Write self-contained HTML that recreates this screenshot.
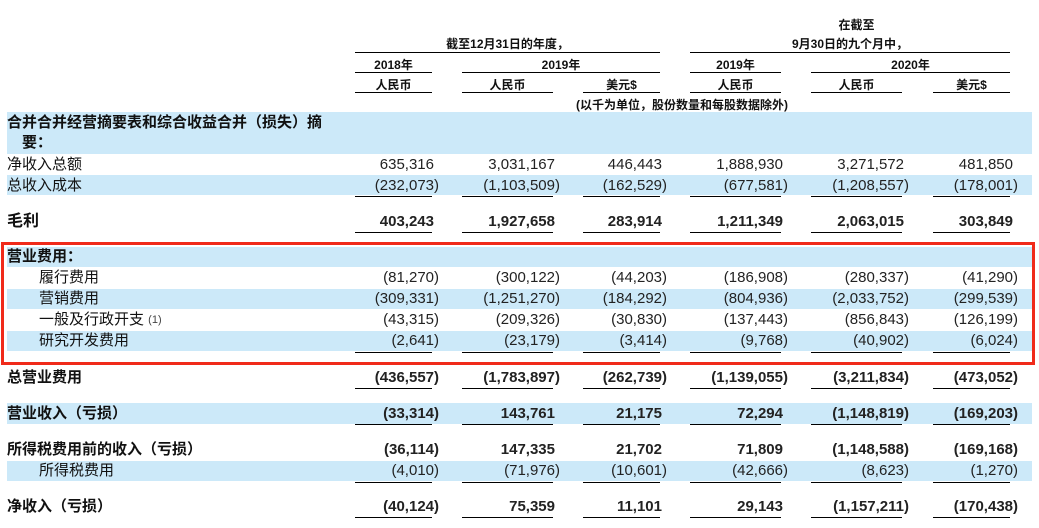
<!DOCTYPE html>
<html><head><meta charset="utf-8"><style>
body{margin:0;width:1039px;height:528px;background:#fff;position:relative;overflow:hidden;font-family:"Liberation Sans","Noto Sans CJK SC",sans-serif;color:#111}
.a{position:absolute;white-space:nowrap}
.band{position:absolute;left:7px;width:1025px;background:#cce9f9}
.h{font-size:12px;font-weight:bold;text-align:center}
.ln{position:absolute;height:1px;background:#000}
.lbl{position:absolute;font-size:15px;line-height:20px}
.b{font-weight:bold}
.n{position:absolute;font-size:15px;line-height:20px;text-align:right;color:#222}
.n i{font-style:normal;visibility:hidden}
.c1{left:330px;width:109px}.c2{left:450px;width:110px}.c3{left:560px;width:107px}
.c4{left:680px;width:108px}.c5{left:800px;width:109px}.c6{left:910px;width:108px}
</style></head><body>
<!-- header -->
<div class="a h" style="left:811px;width:91px;top:16px">在截至</div>
<div class="a h" style="left:355px;width:305px;top:35px">截至12月31日的年度，</div>
<div class="a h" style="left:690px;width:320px;top:35px">9月30日的九个月中，</div>
<div class="ln" style="left:355px;width:305px;top:52px"></div>
<div class="ln" style="left:690px;width:320px;top:52px"></div>
<div class="a h" style="left:355px;width:77px;top:56px">2018年</div>
<div class="a h" style="left:462px;width:198px;top:56px">2019年</div>
<div class="a h" style="left:690px;width:91px;top:56px">2019年</div>
<div class="a h" style="left:811px;width:199px;top:56px">2020年</div>
<div class="ln" style="left:355px;width:77px;top:72px"></div>
<div class="ln" style="left:462px;width:198px;top:72px"></div>
<div class="ln" style="left:690px;width:91px;top:72px"></div>
<div class="ln" style="left:811px;width:199px;top:72px"></div>
<div class="a h" style="left:355px;width:77px;top:76px">人民币</div>
<div class="a h" style="left:462px;width:91px;top:76px">人民币</div>
<div class="a h" style="left:583px;width:77px;top:76px">美元$</div>
<div class="a h" style="left:690px;width:91px;top:76px">人民币</div>
<div class="a h" style="left:811px;width:91px;top:76px">人民币</div>
<div class="a h" style="left:933px;width:77px;top:76px">美元$</div>
<div class="ln" style="left:355px;width:77px;top:92px"></div>
<div class="ln" style="left:462px;width:91px;top:92px"></div>
<div class="ln" style="left:583px;width:77px;top:92px"></div>
<div class="ln" style="left:690px;width:91px;top:92px"></div>
<div class="ln" style="left:811px;width:91px;top:92px"></div>
<div class="ln" style="left:933px;width:77px;top:92px"></div>
<div class="a h" style="left:462px;width:440px;top:96px">(以千为单位，股份数量和每股数据除外)</div>

<!-- bands -->
<div class="band" style="top:112px;height:42px"></div>
<div class="band" style="top:175px;height:20px"></div>
<div class="band" style="top:247px;height:20px"></div>
<div class="band" style="top:289px;height:20px"></div>
<div class="band" style="top:331px;height:20px"></div>
<div class="band" style="top:403px;height:21px"></div>
<div class="band" style="top:461px;height:20px"></div>

<div class="lbl b" style="left:7px;top:113px">合并合并经营摘要表和综合收益合并（损失）摘</div>
<div class="lbl b" style="left:22px;top:133px">要：</div>

<div class="lbl" style="left:7px;top:155px">净收入总额</div>
<div class="n c1" style="top:155px">635,316<i>)</i></div><div class="n c2" style="top:155px">3,031,167<i>)</i></div><div class="n c3" style="top:155px">446,443<i>)</i></div><div class="n c4" style="top:155px">1,888,930<i>)</i></div><div class="n c5" style="top:155px">3,271,572<i>)</i></div><div class="n c6" style="top:155px">481,850<i>)</i></div>

<div class="lbl" style="left:7px;top:176px">总收入成本</div>
<div class="n c1" style="top:176px">(232,073)</div><div class="n c2" style="top:176px">(1,103,509)</div><div class="n c3" style="top:176px">(162,529)</div><div class="n c4" style="top:176px">(677,581)</div><div class="n c5" style="top:176px">(1,208,557)</div><div class="n c6" style="top:176px">(178,001)</div>

<div class="lbl b" style="left:7px;top:212px;font-size:16px">毛利</div>
<div class="n c1 b" style="top:212px">403,243<i>)</i></div><div class="n c2 b" style="top:212px">1,927,658<i>)</i></div><div class="n c3 b" style="top:212px">283,914<i>)</i></div><div class="n c4 b" style="top:212px">1,211,349<i>)</i></div><div class="n c5 b" style="top:212px">2,063,015<i>)</i></div><div class="n c6 b" style="top:212px">303,849<i>)</i></div>

<div class="lbl b" style="left:7px;top:247px">营业费用：</div>
<div class="lbl" style="left:39px;top:268px">履行费用</div>
<div class="n c1" style="top:268px">(81,270)</div><div class="n c2" style="top:268px">(300,122)</div><div class="n c3" style="top:268px">(44,203)</div><div class="n c4" style="top:268px">(186,908)</div><div class="n c5" style="top:268px">(280,337)</div><div class="n c6" style="top:268px">(41,290)</div>
<div class="lbl" style="left:39px;top:289px">营销费用</div>
<div class="n c1" style="top:289px">(309,331)</div><div class="n c2" style="top:289px">(1,251,270)</div><div class="n c3" style="top:289px">(184,292)</div><div class="n c4" style="top:289px">(804,936)</div><div class="n c5" style="top:289px">(2,033,752)</div><div class="n c6" style="top:289px">(299,539)</div>
<div class="lbl" style="left:39px;top:310px">一般及行政开支 <span style="font-size:11px;vertical-align:top;color:#444">(1)</span></div>
<div class="n c1" style="top:310px">(43,315)</div><div class="n c2" style="top:310px">(209,326)</div><div class="n c3" style="top:310px">(30,830)</div><div class="n c4" style="top:310px">(137,443)</div><div class="n c5" style="top:310px">(856,843)</div><div class="n c6" style="top:310px">(126,199)</div>
<div class="lbl" style="left:39px;top:331px">研究开发费用</div>
<div class="n c1" style="top:331px">(2,641)</div><div class="n c2" style="top:331px">(23,179)</div><div class="n c3" style="top:331px">(3,414)</div><div class="n c4" style="top:331px">(9,768)</div><div class="n c5" style="top:331px">(40,902)</div><div class="n c6" style="top:331px">(6,024)</div>

<div class="lbl b" style="left:7px;top:368px">总营业费用</div>
<div class="n c1 b" style="top:368px">(436,557)</div><div class="n c2 b" style="top:368px">(1,783,897)</div><div class="n c3 b" style="top:368px">(262,739)</div><div class="n c4 b" style="top:368px">(1,139,055)</div><div class="n c5 b" style="top:368px">(3,211,834)</div><div class="n c6 b" style="top:368px">(473,052)</div>

<div class="lbl b" style="left:7px;top:404px">营业收入（亏损）</div>
<div class="n c1 b" style="top:404px">(33,314)</div><div class="n c2 b" style="top:404px">143,761<i>)</i></div><div class="n c3 b" style="top:404px">21,175<i>)</i></div><div class="n c4 b" style="top:404px">72,294<i>)</i></div><div class="n c5 b" style="top:404px">(1,148,819)</div><div class="n c6 b" style="top:404px">(169,203)</div>

<div class="lbl b" style="left:7px;top:440px">所得税费用前的收入（亏损）</div>
<div class="n c1 b" style="top:440px">(36,114)</div><div class="n c2 b" style="top:440px">147,335<i>)</i></div><div class="n c3 b" style="top:440px">21,702<i>)</i></div><div class="n c4 b" style="top:440px">71,809<i>)</i></div><div class="n c5 b" style="top:440px">(1,148,588)</div><div class="n c6 b" style="top:440px">(169,168)</div>
<div class="lbl" style="left:39px;top:461px">所得税费用</div>
<div class="n c1" style="top:461px">(4,010)</div><div class="n c2" style="top:461px">(71,976)</div><div class="n c3" style="top:461px">(10,601)</div><div class="n c4" style="top:461px">(42,666)</div><div class="n c5" style="top:461px">(8,623)</div><div class="n c6" style="top:461px">(1,270)</div>

<div class="lbl b" style="left:7px;top:497px">净收入（亏损）</div>
<div class="n c1 b" style="top:497px">(40,124)</div><div class="n c2 b" style="top:497px">75,359<i>)</i></div><div class="n c3 b" style="top:497px">11,101<i>)</i></div><div class="n c4 b" style="top:497px">29,143<i>)</i></div><div class="n c5 b" style="top:497px">(1,157,211)</div><div class="n c6 b" style="top:497px">(170,438)</div>

<!-- underlines -->
<div id="u"></div>
<div class="ln" style="left:355px;width:77px;top:196px"></div><div class="ln" style="left:462px;width:91px;top:196px"></div><div class="ln" style="left:583px;width:77px;top:196px"></div><div class="ln" style="left:690px;width:91px;top:196px"></div><div class="ln" style="left:811px;width:91px;top:196px"></div><div class="ln" style="left:933px;width:77px;top:196px"></div>
<div class="ln" style="left:355px;width:77px;top:232px"></div><div class="ln" style="left:462px;width:91px;top:232px"></div><div class="ln" style="left:583px;width:77px;top:232px"></div><div class="ln" style="left:690px;width:91px;top:232px"></div><div class="ln" style="left:811px;width:91px;top:232px"></div><div class="ln" style="left:933px;width:77px;top:232px"></div>
<div class="ln" style="left:355px;width:77px;top:352px"></div><div class="ln" style="left:462px;width:91px;top:352px"></div><div class="ln" style="left:583px;width:77px;top:352px"></div><div class="ln" style="left:690px;width:91px;top:352px"></div><div class="ln" style="left:811px;width:91px;top:352px"></div><div class="ln" style="left:933px;width:77px;top:352px"></div>
<div class="ln" style="left:355px;width:77px;top:388px"></div><div class="ln" style="left:462px;width:91px;top:388px"></div><div class="ln" style="left:583px;width:77px;top:388px"></div><div class="ln" style="left:690px;width:91px;top:388px"></div><div class="ln" style="left:811px;width:91px;top:388px"></div><div class="ln" style="left:933px;width:77px;top:388px"></div>
<div class="ln" style="left:355px;width:77px;top:424px"></div><div class="ln" style="left:462px;width:91px;top:424px"></div><div class="ln" style="left:583px;width:77px;top:424px"></div><div class="ln" style="left:690px;width:91px;top:424px"></div><div class="ln" style="left:811px;width:91px;top:424px"></div><div class="ln" style="left:933px;width:77px;top:424px"></div>
<div class="ln" style="left:355px;width:77px;top:482px"></div><div class="ln" style="left:462px;width:91px;top:482px"></div><div class="ln" style="left:583px;width:77px;top:482px"></div><div class="ln" style="left:690px;width:91px;top:482px"></div><div class="ln" style="left:811px;width:91px;top:482px"></div><div class="ln" style="left:933px;width:77px;top:482px"></div>
<div class="ln" style="left:355px;width:77px;top:517px"></div><div class="ln" style="left:462px;width:91px;top:517px"></div><div class="ln" style="left:583px;width:77px;top:517px"></div><div class="ln" style="left:690px;width:91px;top:517px"></div><div class="ln" style="left:811px;width:91px;top:517px"></div><div class="ln" style="left:933px;width:77px;top:517px"></div>

<!-- red box -->
<div style="position:absolute;left:1px;top:242px;width:1028px;height:117px;border:3px solid #f02a1a"></div>
</body></html>
